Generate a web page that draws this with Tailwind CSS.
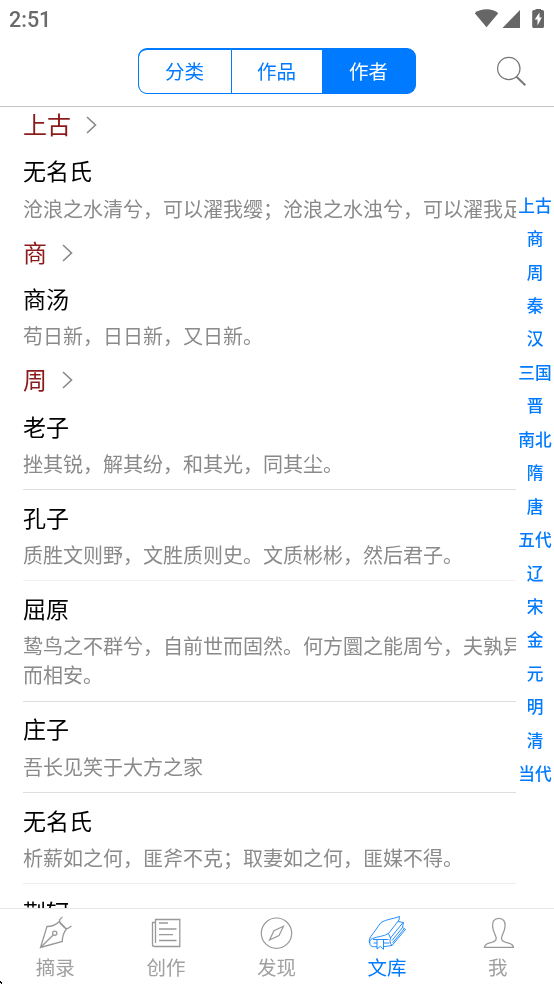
<!DOCTYPE html>
<html lang="zh-CN">
<head>
<meta charset="utf-8">
<meta name="viewport" content="width=device-width, initial-scale=1">
<title>文库</title>
<script src="https://cdn.jsdelivr.net/npm/@tailwindcss/browser@4"></script>
</head>
<body class="bg-white font-['Noto_Sans_CJK_SC',sans-serif]">
<div class="relative flex h-[984px] w-[554px] flex-col overflow-hidden will-change-transform">
  <header class="h-[107px] shrink-0 border-b border-[#c4c4c6]">
    <div class="flex h-[38px] items-center justify-between pl-[9px] pr-[10px]">
      <span class="pt-[2px] font-[Roboto,sans-serif] text-[21.500px] font-medium leading-[38px] text-[#6a6a6a]">2:51</span>
      <div class="flex items-center">
        <svg class="h-[20px] w-[69px]" viewBox="475 9 69 20" fill="#666">
          <path d="M474.7 13.2C480 8 493 8 498.3 13.2L486.5 27.2Z"/>
          <path d="M520 10V28H502.500Z"/>
          <path fill-rule="evenodd" d="M535.500 8.300H541V10H542.500Q544 10 544 11.500V26.500Q544 28 542.500 28H534Q532.200 28 532.200 26.500V11.500Q532.200 10 534 10H535.500ZM539.500 12.500L534.700 19.500H537.500V25.500L541.800 17.500H539.500Z"/>
        </svg>
      </div>
    </div>
    <div class="flex h-[68px] pt-[10px]">
      <div class="ml-[138px] flex h-[46px] w-[278px] overflow-hidden rounded-[9px] border border-t-2 border-[#007aff] bg-[#007aff] text-[19.500px] leading-[42px] text-[#007aff]">
        <div class="w-[93px] rounded-l-[7px] border-r border-[#007aff] bg-white pr-px text-center">分类</div>
        <div class="w-[90px] bg-white pr-px text-center">作品</div>
        <div class="flex-1 text-center text-white">作者</div>
      </div>
      <svg class="ml-[80px] mt-[8px] h-[31px] w-[31px]" viewBox="496 56 31 31" fill="none" stroke="#777">
        <circle cx="508.800" cy="68.500" r="11.200" stroke-width="1.200"/>
        <path d="M516.500 76.800L525.300 85.300" stroke-width="2"/>
      </svg>
    </div>
  </header>

  <div class="flex min-h-0 flex-1">
    <main class="w-[516px] shrink-0 overflow-hidden pl-[23px] whitespace-nowrap">
      <section>
        <h2 class="flex h-[36.400px] items-center text-[24px] leading-[34px] text-[#8b1a1a]"><span class="pb-[2px]">上古</span><svg class="ml-[14.500px] h-[18px] w-[11px]" viewBox="0 0 11 18" fill="none" stroke="#888" stroke-width="1.600"><path d="M1 1L9.500 9L1 17"/></svg></h2>
        <article class="h-[91.200px] pt-[10px]">
          <h3 class="text-[23px] leading-[34px] text-black">无名氏</h3>
          <p class="mt-[6.500px] text-[20px] leading-[29px] text-[#8a8a8a]">沧浪之水清兮，可以濯我缨；沧浪之水浊兮，可以濯我足。</p>
        </article>
      </section>
      <section>
        <h2 class="flex h-[36.400px] items-center text-[24px] leading-[34px] text-[#8b1a1a]"><span class="pb-[2px]">商</span><svg class="ml-[14.500px] h-[18px] w-[11px]" viewBox="0 0 11 18" fill="none" stroke="#888" stroke-width="1.600"><path d="M1 1L9.500 9L1 17"/></svg></h2>
        <article class="h-[91.200px] pt-[10px]">
          <h3 class="text-[23px] leading-[34px] text-black">商汤</h3>
          <p class="mt-[6.500px] text-[20px] leading-[29px] text-[#8a8a8a]">苟日新，日日新，又日新。</p>
        </article>
      </section>
      <section>
        <h2 class="flex h-[36.400px] items-center text-[24px] leading-[34px] text-[#8b1a1a]"><span class="pb-[2px]">周</span><svg class="ml-[14.500px] h-[18px] w-[11px]" viewBox="0 0 11 18" fill="none" stroke="#888" stroke-width="1.600"><path d="M1 1L9.500 9L1 17"/></svg></h2>
        <article class="h-[91.200px] border-b border-[#dedede] pt-[10px]">
          <h3 class="text-[23px] leading-[34px] text-black">老子</h3>
          <p class="mt-[6.400px] text-[20px] leading-[29px] text-[#8a8a8a]">挫其锐，解其纷，和其光，同其尘。</p>
        </article>
        <article class="h-[91.200px] border-b border-[#f2f2f2] pt-[10px]">
          <h3 class="text-[23px] leading-[34px] text-black">孔子</h3>
          <p class="mt-[6.200px] text-[20px] leading-[29px] text-[#8a8a8a]">质胜文则野，文胜质则史。文质彬彬，然后君子。</p>
        </article>
        <article class="h-[120.800px] border-b border-[#dedede] pt-[9.700px]">
          <h3 class="text-[23px] leading-[34px] text-black">屈原</h3>
          <p class="mt-[6.800px] text-[20px] leading-[29px] text-[#8a8a8a]">鸷鸟之不群兮，自前世而固然。何方圜之能周兮，夫孰异道<br>而相安。</p>
        </article>
        <article class="h-[91.200px] border-b border-[#dedede] pt-[9.700px]">
          <h3 class="text-[23px] leading-[34px] text-black">庄子</h3>
          <p class="mt-[6.200px] text-[20px] leading-[29px] text-[#8a8a8a]">吾长见笑于大方之家</p>
        </article>
        <article class="h-[91.200px] border-b border-[#ececec] pt-[9.700px]">
          <h3 class="text-[23px] leading-[34px] text-black">无名氏</h3>
          <p class="mt-[6.200px] text-[20px] leading-[29px] text-[#8a8a8a]">析薪如之何，匪斧不克；取妻如之何，匪媒不得。</p>
        </article>
        <article class="pt-[9.700px]">
          <h3 class="text-[23px] leading-[34px] text-black">荆轲</h3>
        </article>
      </section>
    </main>
    <nav class="flex w-[38px] shrink-0 flex-col pt-[81.600px] text-center text-[16.700px] font-medium leading-[33.450px] whitespace-nowrap text-[#007aff]">
      <span>上古</span><span>商</span><span>周</span><span>秦</span><span>汉</span><span>三国</span><span>晋</span><span>南北</span><span>隋</span><span>唐</span><span>五代</span><span>辽</span><span>宋</span><span>金</span><span>元</span><span>明</span><span>清</span><span>当代</span>
    </nav>
  </div>

  <footer class="grid h-[76px] shrink-0 grid-cols-5 border-t border-[#e6e6e6] bg-white pr-px text-[19.500px] leading-[28px] text-[#a0a0a0]">
    <div class="flex flex-col items-center pt-[4px]">
      <svg class="h-[40px] w-[40px]" viewBox="35 913 40 40" fill="none" stroke="#999" stroke-width="1.300">
        <path d="M40.500 947.500L47 926.500C51 926.500 56 925 59.300 921.500L66.500 929C63.500 932.500 62.300 937 62.300 941.500ZM40.500 947.500L53.200 935M62.500 917C59.500 919 58.800 921 60 923C61.500 925.500 64.500 927.500 65.500 928.500C67 929.500 69 928 71.500 926"/><circle cx="54.700" cy="933.200" r="2.100"/>
      </svg>
      <span>摘录</span>
    </div>
    <div class="flex flex-col items-center pt-[4px]">
      <svg class="h-[40px] w-[40px]" viewBox="146 913 40 40" fill="none" stroke="#999" stroke-width="1.300">
        <path d="M155.500 943V919.500H179.800V946.500H154.500Q152.500 946.500 152.500 944.500V922.500H155M159 923H168M159 929H176.500M159 934.700H173M159 940.500H176.500"/>
      </svg>
      <span>创作</span>
    </div>
    <div class="flex flex-col items-center pt-[4px]">
      <svg class="h-[40px] w-[40px]" viewBox="256.500 913 40 40" fill="none" stroke="#999" stroke-width="1.200">
        <circle cx="277" cy="933.200" r="15.200"/><path d="M284 926.300L279.500 935.500L270 940L274.500 930.700Z"/>
      </svg>
      <span>发现</span>
    </div>
    <div class="flex flex-col items-center pt-[4px] text-[#007aff]">
      <svg class="h-[40px] w-[40px]" viewBox="367 913 40 40" fill="none" stroke="#007aff" stroke-width="0.850" stroke-linejoin="round">
        <path d="M370.500 937L381 922.500C387 919 393 919 399.500 916.500L399 920L388.500 933.500C384 936.500 377 936.500 372.500 938.500C370.500 939 369.500 941 369.800 943.200C370 945.500 371.500 946.700 373.500 946.700H377M370.500 937C369 939.500 369 942 369.800 943.200M383.500 946.700L392 945.500L405.500 929.500L402.500 927.500L403.500 922.500L398 921.500M388.500 933.500L390.500 938C389.500 940.500 390 943.500 392 945.500M390.500 938L403 922.500M392 940.500L402.500 927.500M392.500 943L404 929M373 939.500H388.500M373.500 943H377M383.500 943H389.500M377 939.500V949L380.300 946.300L383.500 949.300V939.500"/>
      </svg>
      <span>文库</span>
    </div>
    <div class="flex flex-col items-center pt-[4px]">
      <svg class="h-[40px] w-[40px]" viewBox="477.500 913 40 40" fill="none" stroke="#999" stroke-width="1.300">
        <path d="M484 947.300C484.500 944.500 486 943.800 488.500 943.200C493 942.200 495.700 941 495.700 938.500C495.700 935.500 492.500 932 492.200 927C491.700 921.500 493.500 918.300 498.300 918.300C503 918.300 505 921.500 504.500 927C504 932 501 935.500 501 938.500C501 941 503.500 942.200 508 943.200C510.500 943.800 512.500 944.500 513 947.300Z"/>
      </svg>
      <span>我</span>
    </div>
  </footer>
  <svg class="absolute bottom-0 left-0 h-[4px] w-[3px]" viewBox="0 0 3 4" fill="#000"><path d="M0 1H1V2H2V4H1V3H0Z"/></svg>
</div>
</body>
</html>
